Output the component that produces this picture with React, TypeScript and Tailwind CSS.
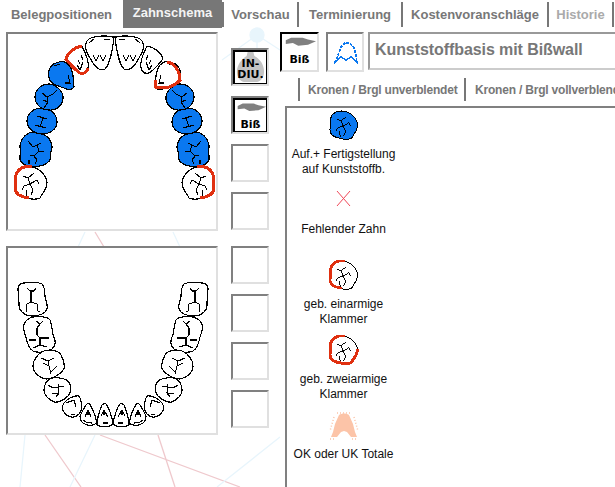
import React from "react";

const BLUE = "#0a78f0";
const RED = "#e03010";

type T = { d: string; f: string; red?: string };

const wisdom: T = {
  d: "M25,167 C35,165 45,172 47,182 C47,190 42,193 40,198 C35,200 30,199 27,198 C20,197 15,194 15,188 C17,184 15,180 16,175 C17,170 20,168 25,167 Z",
  f: "M34,173 L28,178 L23,176 M28,178 L30,184 L24,186 L22,190 M30,184 L33,190 L31,195 M30,184 L37,180 L39,184 M26,190 L27,196",
  red: "M32,166 C25,166 18,168 16,175 C15,180 17,184 15,188 C15,194 20,197 29,198",
};
const molar: T = {
  d: "M34,132 C44,132 52,139 52,147 C52,150 51,152 50,154 C52,158 50,161 47,163 C42,167 33,167 28,166 C23,165 19,161 20,156 C21,153 20,150 20,146 C21,138 27,132 34,132 Z",
  f: "M28,141 L33,147 L37,145 L41,143 M37,145 L39,151 L34,156 L37,160 L35,164 M34,156 L30,155 M39,151 L44,152 M29,164 L29,160",
};
const pm1: T = {
  d: "M42,108 C51,108 57,115 57,122 C57,129 50,134 42,134 C34,134 27,128 27,121 C27,113 34,108 42,108 Z",
  f: "M37,116 L47,119 M43,118 L40,127 M35,125 L46,128",
};
const pm2: T = {
  d: "M49,84 C57,85 64,92 63,99 C62,106 56,111 49,110 C42,110 35,105 35,97 C35,90 41,84 49,84 Z",
  f: "M42,93 L47,97 L53,94 L57,90 M47,97 L48,102 L44,108 M43,100 L48,102",
};
const canine: T = {
  d: "M62,61 C68,62 72,68 73,76 L74,87 C72,90 68,90 64,88 C58,86 50,84 49,78 C47,72 50,65 56,63 Z",
  f: "M54,66 L60,64 M68,75 L70,83 L65,83",
  red: "M62,62 C54,63 49,72 49,80 C54,86 64,90 74,87 L74,80",
};
const lateral: T = {
  d: "M82,46 C75,47 68,52 66,59 C70,64 75,70 80,73 C84,74 87,72 88,68 C90,62 85,52 82,46 Z",
  f: "M77,65 L80,70 L83,62 M78,60 L80,64 M81,55 L83,60",
  red: "M82,46 C75,47 68,52 66,59 C70,64 75,70 80,73 C84,74 87,72 88,68",
};
const central: T = {
  d: "M113,37 C105,35 90,36 87,41 C84,46 86,52 90,58 C94,66 98,70 103,70 C108,69 112,55 114,37 Z",
  f: "M89,43 L94,39 M110,40 L104,39 M93,55 L96,61 L99,55 M100,55 L103,61 L106,55",
};

function Tooth({ t, fill = "#fff", red = false }: { t: T; fill?: string; red?: boolean }) {
  return (
    <g shapeRendering="crispEdges">
      <path d={t.d} fill={fill} stroke="#000" strokeWidth="1.2" />
      <path d={t.f} fill="none" stroke="#000" strokeWidth="1.1" />
      {red && t.red && <path d={t.red} fill="none" stroke={RED} strokeWidth="3" />}
    </g>
  );
}

function Upper() {
  const m = "translate(229,0) scale(-1,1)";
  return (
    <svg viewBox="8 34 208 195" className="block w-full h-full">
      <Tooth t={molar} fill={BLUE} />
      <Tooth t={pm1} fill={BLUE} />
      <Tooth t={pm2} fill={BLUE} />
      <Tooth t={canine} fill={BLUE} />
      <Tooth t={wisdom} red />
      <Tooth t={lateral} red />
      <Tooth t={central} />
      <g transform={m}>
        <Tooth t={molar} fill={BLUE} />
        <Tooth t={pm1} fill={BLUE} />
        <Tooth t={pm2} fill={BLUE} />
        <Tooth t={wisdom} red />
        <Tooth t={lateral} />
        <Tooth t={central} />
        <Tooth t={canine} red />
      </g>
    </svg>
  );
}

const lowerTeeth: T[] = [
  {
    d: "M24,283 C30,282 38,282 42,284 C45,287 45,292 45,297 C46,301 48,305 47,309 C45,314 38,316 32,316 C25,316 19,311 19,305 C19,298 18,292 18,288 C19,285 21,283 24,283 Z",
    f: "M27,288 L30,291 L34,291 L36,288 M31,291 L31,302 L27,304 L26,312 M31,302 L37,304 L38,311 L40,312",
  },
  {
    d: "M33,317 C40,316 48,317 50,320 C52,325 52,330 53,335 C56,340 56,345 52,349 C47,353 38,353 33,351 C28,348 27,342 26,337 C24,332 23,328 24,324 C26,320 29,318 33,317 Z",
    f: "M36,321 L40,324 L43,321 M40,324 L37,328 L37,335 L40,338 L49,338 M40,338 L40,345 L33,348 M40,345 L47,347 M29,340 L36,340",
  },
  {
    d: "M44,351 C50,349 58,350 61,355 C63,359 65,365 64,369 C60,375 52,379 46,379 C40,378 33,373 33,366 C33,360 38,353 44,351 Z",
    f: "M41,358 L48,361 L54,358 M48,361 L49,366 L51,374 M49,366 L43,363 M57,366 L51,372",
  },
  {
    d: "M52,378 C60,377 68,379 70,384 C71,388 71,393 68,396 C64,400 58,403 54,402 C50,400 44,396 44,390 C44,385 47,379 52,378 Z",
    f: "M48,385 L53,388 L64,386 M58,384 L59,393 L56,397 M52,394 L59,393",
  },
  {
    d: "M64,403 C67,399 74,395 79,396 C82,400 82,408 81,411 C79,415 75,418 71,417 C66,416 63,412 62,407 Z",
    f: "M66,403 L74,400 L76,407 M71,414 L75,415",
  },
  {
    d: "M88,403 C92,405 95,415 97,423 C93,426 88,426 85,424 C82,423 80,420 80,416 C82,412 85,405 88,403 Z",
    f: "M85,417 L88,410 L91,417 M88,410 L88,415 M83,420 C85,422 88,423 92,423",
  },
  {
    d: "M105,403 C108,405 112,416 113,424 C110,427 102,428 97,425 C97,420 99,412 102,405 Z",
    f: "M101,416 L104,410 L108,417 M104,410 L104,415 M103,423 L108,423",
  },
];

function Lower() {
  return (
    <svg viewBox="8 248 208 185" className="block w-full h-full">
      {lowerTeeth.map((t, i) => (
        <Tooth key={i} t={t} />
      ))}
      <g transform="translate(226,0) scale(-1,1)">
        {lowerTeeth.map((t, i) => (
          <Tooth key={i} t={t} />
        ))}
      </g>
    </svg>
  );
}

function BissMark() {
  return (
    <div className="flex flex-col items-center h-full">
      <svg viewBox="0 0 38 18" className="w-[34px] h-[16px] block mt-[1px]">
        <path d="M3,6 L9,3 L22,3 L28,5 L37,7 L28,11 L17,12 L11,9 L3,10 Z" fill="#808080" />
      </svg>
      <span className="font-['DejaVu_Sans'] font-bold text-[11px] leading-[13px] text-black mt-[2px]">
        Biß
      </span>
    </div>
  );
}

function Btn({ children }: { children?: React.ReactNode }) {
  return (
    <div className="w-[38px] h-[38px] border-2 border-t-[#808080] border-l-[#808080] border-r-[#e0e0e0] border-b-[#e0e0e0] bg-white">
      {children && <div className="w-full h-full border-t-2 border-l-2 border-black border-r border-b">{children}</div>}
    </div>
  );
}

function Indiv() {
  return (
    <div className="relative w-full h-full overflow-hidden">
      <svg viewBox="0 0 32 32" className="absolute inset-0 w-full h-full">
        <path d="M13,0 L19,0 L20,4 C26,7 30,13 30,20 C30,27 26,31 21,31 L11,31 C6,31 2,27 2,20 C2,13 7,7 12,4 Z" fill="#c4c4c4" />
      </svg>
      <div className="relative flex flex-col items-center pt-[6px] font-['DejaVu_Sans'] font-bold text-[11px] leading-[11px] text-black">
        <span>IN-</span>
        <span>DIU.</span>
      </div>
    </div>
  );
}

function ItemIcon({ kind }: { kind: "blue" | "x" | "one" | "two" | "total" }) {
  if (kind === "x") {
    return (
      <svg viewBox="0 0 30 30" className="w-[30px] h-[30px] block">
        <path d="M8,6 L21,21 M21,6 L8,21" stroke="#f04858" strokeWidth="1" fill="none" />
      </svg>
    );
  }
  if (kind === "total") {
    return (
      <svg viewBox="0 0 30 30" className="w-[30px] h-[30px] block">
        <path d="M10,5 C13,3 17,3 20,5 L24,14 L26,22 L28,27 L22,27 L18,22 L15,21 L12,22 L8,27 L2,27 L4,22 L6,14 Z" fill="#fcc4a8" />
        <path d="M8,3 L22,3 M25,7 L29,21 M5,7 L1,21 M1,29 L7,29 M23,29 L29,29" stroke="#fcc4a8" strokeWidth="1.5" strokeDasharray="1 2" fill="none" />
      </svg>
    );
  }
  const fill = kind === "blue" ? BLUE : "#fff";
  return (
    <svg viewBox="14 165.5 34.5 34.5" className="w-[30px] h-[30px] block">
      <Tooth t={wisdom} fill={fill} red={kind === "one"} />
      {kind === "two" && (
        <path
          d="M32,166 C25,166 18,168 16,175 C15,180 17,184 15,188 C15,194 20,197 29,198 C35,200 40,198 41,195 C43,192 46,190 47,182"
          fill="none"
          stroke={RED}
          strokeWidth="3.4"
          shapeRendering="crispEdges"
        />
      )}
    </svg>
  );
}

const items: { kind: "blue" | "x" | "one" | "two" | "total"; label: string[] }[] = [
  { kind: "blue", label: ["Auf.+ Fertigstellung", "auf Kunststoffb."] },
  { kind: "x", label: ["Fehlender Zahn"] },
  { kind: "one", label: ["geb. einarmige", "Klammer"] },
  { kind: "two", label: ["geb. zweiarmige", "Klammer"] },
  { kind: "total", label: ["OK oder UK Totale"] },
];

const tabs: { label: string; w: string; color?: string }[] = [
  { label: "Vorschau", w: "w-[77px]" },
  { label: "Terminierung", w: "w-[104px]" },
  { label: "Kostenvoranschläge", w: "w-[146px]" },
  { label: "Historie", w: "w-[65px]", color: "text-[#aaaaaa]" },
];

export default function App() {
  return (
    <div className="relative w-[615px] h-[487px] overflow-hidden bg-white font-['Liberation_Sans',sans-serif]">
      <svg viewBox="0 0 615 487" className="absolute inset-0 w-full h-full">
        <g stroke="#efc9cd" strokeWidth="1.3" fill="none">
          <path d="M95,232 L104,247 M45,435 L81,487 M100,435 L240,487 M158,435 L175,487" />
        </g>
        <g stroke="#e8f5fc" strokeWidth="1.3" fill="none">
          <path d="M85,232 L78,247 M173,232 L180,247 M25,435 L20,487 M95,435 L70,487 M280,437 L217,487 M257,35 L222,60 M257,35 L280,50 M257,35 L257,48" />
          <circle cx="257" cy="35" r="7" fill="#e8f5fc" />
        </g>
      </svg>

      <div className="relative flex flex-col">
        <div className="flex h-[28px] items-stretch text-[13px] font-bold text-[#777777]">
          <div className="w-[123px] flex items-center justify-center pt-[2px]">Belegpositionen</div>
          <div className="w-[99px] bg-[#777777] text-[#f4f4f4] flex items-center justify-center pb-[3px]">Zahnschema</div>
          {tabs.map((t, i) => (
            <div
              key={t.label}
              className={`${t.w} ${t.color ?? ""} flex items-center justify-center border-r-2 border-[#777777] mt-[2px] h-[25px] ${i === 0 ? "border-l-2" : ""}`}
            >
              {t.label}
            </div>
          ))}
        </div>

        <div className="flex mt-[4px]">
          <div className="ml-[6px] w-[212px] flex flex-col gap-[15px]">
            <div className="h-[199px] bg-white border-2 border-t-[#808080] border-l-[#808080] border-r-[#e0e0e0] border-b-[#e0e0e0] overflow-hidden">
              <Upper />
            </div>
            <div className="h-[189px] bg-white border-2 border-t-[#808080] border-l-[#808080] border-r-[#e0e0e0] border-b-[#e0e0e0] overflow-hidden">
              <Lower />
            </div>
          </div>

          <div className="ml-[13px] w-[38px] pt-[16px] flex flex-col gap-[10px]">
            <Btn>
              <Indiv />
            </Btn>
            <Btn>
              <BissMark />
            </Btn>
            <Btn />
            <Btn />
            <div className="mt-[6px]">
              <Btn />
            </div>
            <Btn />
            <Btn />
            <Btn />
          </div>

          <div className="ml-[11px] flex-1 min-w-0 flex flex-col">
            <div className="flex items-start h-[40px]">
              <div className="w-[39px] h-[40px] bg-white border-t-2 border-l-2 border-black border-r-2 border-b-2 border-r-[#e0e0e0] border-b-[#e0e0e0]">
                <BissMark />
              </div>
              <div className="ml-[7px] w-[38px] h-[40px] bg-white border-2 border-t-[#808080] border-l-[#808080] border-r-[#e0e0e0] border-b-[#e0e0e0]">
                <svg viewBox="328 34 34 36" className="block w-full h-full">
                  <g stroke="#0a78f0" strokeWidth="1.6" fill="none" shapeRendering="crispEdges">
                    <path d="M335,63 L338,55 L341,47 L345,43 L350,43 L354,48 L356,55 L357,63" strokeDasharray="3 1" />
                    <path d="M334,63 L341,57 L346,60 L351,57 L358,63" />
                  </g>
                </svg>
              </div>
              <div className="ml-[4px] flex-1 h-[38px] bg-white border-t-2 border-l-2 border-[#999999] border-b-2 border-b-[#cccccc] flex items-center pl-[5px] pb-[2px] text-[16px] tracking-[-0.08px] font-bold text-[#777777] whitespace-nowrap">
                Kunststoffbasis mit Bißwall
              </div>
            </div>

            <div className="flex h-[23px] mt-[6px] ml-[18px] text-[12px] tracking-[-0.2px] font-bold text-[#777777] whitespace-nowrap overflow-hidden">
              <div className="w-[168px] shrink-0 flex items-center pl-[8px] border-l-2 border-r-2 border-[#777777]">Kronen / Brgl unverblendet</div>
              <div className="flex items-center pl-[9px] shrink-0">Kronen / Brgl vollverblendet</div>
            </div>

            <div className="mt-[5px] ml-[5px] h-[381px] bg-white border-t-2 border-l-2 border-[#808080]">
              <div className="w-[113px] flex flex-col pt-[2px]">
                {items.map((it) => (
                  <div key={it.kind} className="h-[75px] flex flex-col items-center">
                    <ItemIcon kind={it.kind} />
                    <div className="mt-[7px] text-[12px] leading-[15px] text-center text-[#111111] whitespace-nowrap">
                      {it.label.map((l) => (
                        <div key={l}>{l}</div>
                      ))}
                    </div>
                  </div>
                ))}
              </div>
            </div>
          </div>
        </div>
      </div>
    </div>
  );
}
